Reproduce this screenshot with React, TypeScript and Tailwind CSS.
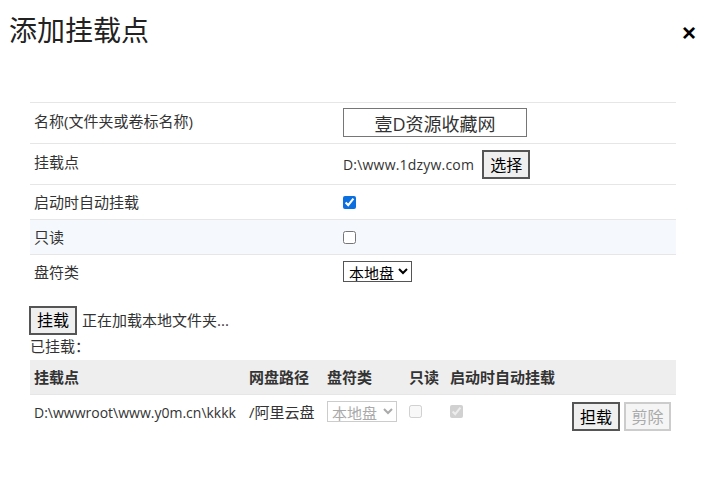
import React from "react";

const F = { fontFamily: '"Open Sans", "Noto Sans CJK SC", sans-serif' };

export default function App() {
  return (
    <div className="w-[712px] h-[480px] bg-white text-[#333] relative overflow-hidden" style={F}>
      <div className="flex items-start justify-between pl-[9px] pr-[16px] pt-[10px]">
        <h1 className="text-[28px] leading-[40px] text-[#222] font-normal">添加挂载点</h1>
        <span className="text-[24px] font-bold text-black leading-none mt-[11px]" style={{ fontFamily: '"Liberation Sans", sans-serif' }}>×</span>
      </div>

      <table className="ml-[30px] mt-[52px] w-[646px] border-collapse text-[15px]">
        <tbody>
          <tr className="border-t border-b border-[#e6e6e6] h-[41px]">
            <td className="w-[309px] pl-[4px] align-top pt-[7px]">名称(文件夹或卷标名称)</td>
            <td className="pl-[4px] align-top pt-[5px]">
              <input
                readOnly
                value="壹D资源收藏网"
                className="w-[184px] h-[29px] border border-[#767676] text-center text-[18px] text-[#333] outline-none"
                style={F}
              />
            </td>
          </tr>
          <tr className="border-b border-[#e6e6e6] h-[41px]">
            <td className="pl-[4px] align-top pt-[7px]">挂载点</td>
            <td className="pl-[4px] align-top pt-[6px]">
              <div className="flex items-center">
                <span className="text-[14px] text-[#333] mr-[8px] tracking-[0.2px]">D:\www.1dzyw.com</span>
                <button className="h-[29px] px-[6px] bg-[#efefef] border-2 border-[#555] text-[16px] leading-none text-black">选择</button>
              </div>
            </td>
          </tr>
          <tr className="border-b border-[#e6e6e6] h-[35px]">
            <td className="pl-[4px]">启动时自动挂载</td>
            <td className="pl-[4px]">
              <input type="checkbox" defaultChecked className="w-[13px] h-[13px] align-middle accent-[#0b6fe0] -mt-[2px]" />
            </td>
          </tr>
          <tr className="border-b border-[#e6e6e6] h-[35px] bg-[#f5f8fc]">
            <td className="pl-[4px]">只读</td>
            <td className="pl-[4px]">
              <input type="checkbox" className="w-[13px] h-[13px] align-middle -mt-[2px]" />
            </td>
          </tr>
          <tr className="h-[35px]">
            <td className="pl-[4px]">盘符类</td>
            <td className="pl-[4px]">
              <select className="h-[21px] border border-[#555] text-[15px] text-black bg-white pl-[1px]" style={F}>
                <option>本地盘</option>
              </select>
            </td>
          </tr>
        </tbody>
      </table>

      <div className="ml-[29px] mt-[16px] flex items-center">
        <button className="h-[29px] w-[48px] bg-[#efefef] border-2 border-[#555] text-[16px] leading-none text-black">挂载</button>
        <span className="ml-[5px] text-[15px] text-[#333]">正在加载本地文件夹...</span>
      </div>
      <div className="ml-[30px] text-[15px] leading-[22px] text-[#333]">已挂载：</div>

      <table className="ml-[30px] mt-[3px] w-[646px] border-collapse text-[15px]">
        <thead>
          <tr className="bg-[#eeeeee] h-[35px] text-left">
            <th className="w-[215px] pl-[4px] font-bold">挂载点</th>
            <th className="w-[78px] pl-[4px] font-bold">网盘路径</th>
            <th className="w-[82px] pl-[4px] font-bold">盘符类</th>
            <th className="w-[41px] pl-[4px] font-bold">只读</th>
            <th className="pl-[4px] font-bold" colSpan={2}>启动时自动挂载</th>
          </tr>
        </thead>
        <tbody>
          <tr className="h-[37px] border-t border-[#e6e6e6]">
            <td className="pl-[4px] align-top pt-[7px] text-[14px]">D:\wwwroot\www.y0m.cn\kkkk</td>
            <td className="pl-[4px] align-top pt-[6px]">/阿里云盘</td>
            <td className="pl-[4px] align-top pt-[6px]">
              <select disabled className="h-[21px] w-[70px] border border-[#ccc] text-[15px] text-[#aaa] bg-white" style={F}>
                <option>本地盘</option>
              </select>
            </td>
            <td className="pl-[4px] align-top pt-[10px]">
              <input type="checkbox" disabled className="w-[13px] h-[13px] align-top" />
            </td>
            <td className="pl-[4px] align-top pt-[10px]">
              <input type="checkbox" disabled defaultChecked className="w-[13px] h-[13px] align-top" />
            </td>
            <td className="pr-[5px] align-top pt-[7px] text-right">
              <button className="h-[29px] w-[48px] bg-[#efefef] border-2 border-[#555] text-[16px] leading-none text-black">担载</button>
              <button disabled className="ml-[4px] h-[29px] w-[47px] bg-[#f5f5f5] border-2 border-[#ccc] text-[16px] leading-none text-[#aaa]">剪除</button>
            </td>
          </tr>
        </tbody>
      </table>
    </div>
  );
}
